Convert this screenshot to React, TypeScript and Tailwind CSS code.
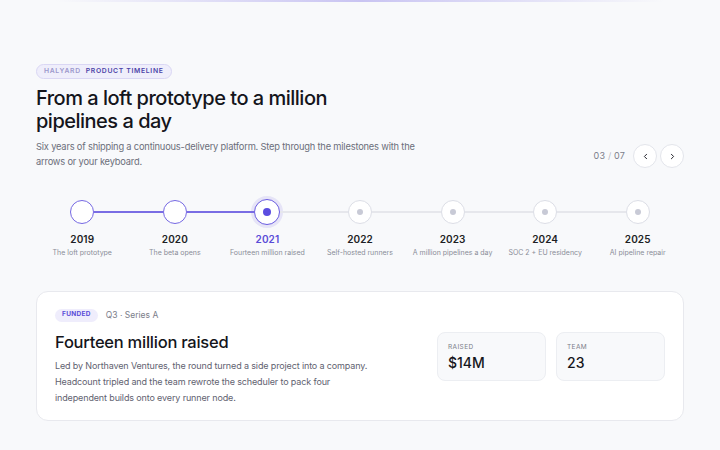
import React, { useState } from 'react';

type Milestone = {
    year: string;
    label: string;
};

const milestones: Milestone[] = [
    { year: '2019', label: 'The loft prototype' },
    { year: '2020', label: 'The beta opens' },
    { year: '2021', label: 'Fourteen million raised' },
    { year: '2022', label: 'Self-hosted runners' },
    { year: '2023', label: 'A million pipelines a day' },
    { year: '2024', label: 'SOC 2 + EU residency' },
    { year: '2025', label: 'AI pipeline repair' },
];

function Node({ index, active }: { index: number; active: number }) {
    if (index < active) {
        return <div className="w-[24px] h-[24px] rounded-full bg-white border-[1.5px] border-[#7568e3] shrink-0" />;
    }
    if (index === active) {
        return (
            <div className="w-[26px] h-[26px] rounded-full bg-white border-[1.5px] border-[#6a5ce0] shadow-[0_0_0_3px_rgba(117,104,227,0.14)] flex items-center justify-center shrink-0">
                <div className="w-[8px] h-[8px] rounded-full bg-[#5b4de0]" />
            </div>
        );
    }
    return (
        <div className="w-[24px] h-[24px] rounded-full bg-white border-[1.5px] border-[#dcdee6] flex items-center justify-center shrink-0">
            <div className="w-[6px] h-[6px] rounded-full bg-[#c8cad6]" />
        </div>
    );
}

export default function App() {
    const [active, setActive] = useState(2);
    const current = milestones[active];

    return (
        <div className="w-[720px] h-[450px] bg-[#f8f9fb] overflow-hidden relative font-['Inter',sans-serif] text-[#15161c]">
            {/* top glow line */}
            <div className="h-[2px] mx-[55px] bg-gradient-to-r from-transparent via-[#c9c4f2] to-transparent" />

            <div className="px-[36px] pt-[62px]">
                {/* Eyebrow */}
                <div className="flex w-fit items-center gap-[5px] h-[15px] px-[7px] rounded-full bg-[#efeefb] border border-[#dad7f4] text-[6.8px] font-semibold tracking-[0.1em]">
                    <span className="text-[#9c98cc]">HALYARD</span>
                    <span className="text-[#4c44a8]">PRODUCT TIMELINE</span>
                </div>

                {/* Header */}
                <div className="flex items-end justify-between">
                    <div>
                        <h1 className="mt-[8px] text-[20px] leading-[23px] font-medium tracking-[-0.025em] text-[#14151b]">
                            From a loft prototype to a million
                            <br />
                            pipelines a day
                        </h1>
                        <p className="mt-[6px] w-[380px] text-[9.3px] leading-[15px] tracking-[-0.02em] text-[#6b6e7a]">
                            Six years of shipping a continuous-delivery platform. Step through the milestones with the arrows or your keyboard.
                        </p>
                    </div>
                    <div className="flex items-center gap-[3px] mb-[1px]">
                        <span className="text-[9px] text-[#7b7e8a] mr-[5px] tracking-[0.02em]">
                            0{active + 1} <span className="text-[#b8bac4]">/</span> 07
                        </span>
                        <button
                            className="w-[24px] h-[24px] rounded-full bg-white border border-[#e3e5eb] flex items-center justify-center"
                            onClick={() => setActive(Math.max(0, active - 1))}
                        >
                            <svg width="9" height="9" viewBox="0 0 24 24" fill="none" stroke="#22232b" strokeWidth="2.6" strokeLinecap="round" strokeLinejoin="round">
                                <path d="M15 18l-6-6 6-6" />
                            </svg>
                        </button>
                        <button
                            className="w-[24px] h-[24px] rounded-full bg-white border border-[#e3e5eb] flex items-center justify-center"
                            onClick={() => setActive(Math.min(6, active + 1))}
                        >
                            <svg width="9" height="9" viewBox="0 0 24 24" fill="none" stroke="#22232b" strokeWidth="2.6" strokeLinecap="round" strokeLinejoin="round">
                                <path d="M9 18l6-6-6-6" />
                            </svg>
                        </button>
                    </div>
                </div>

                {/* Timeline */}
                <div className="grid grid-cols-7 mt-[30px]">
                    {milestones.map((m, i) => (
                        <button key={m.year} className="flex flex-col items-center" onClick={() => setActive(i)}>
                            <div className="flex items-center w-full h-[26px]">
                                <div className={`flex-1 h-[2px] ${i === 0 ? 'bg-transparent' : i <= active ? 'bg-[#7a6de4]' : 'bg-[#e6e7ec]'}`} />
                                <Node index={i} active={active} />
                                <div className={`flex-1 h-[2px] ${i === 6 ? 'bg-transparent' : i < active ? 'bg-[#7a6de4]' : 'bg-[#e6e7ec]'}`} />
                            </div>
                            <div className={`mt-[8px] text-[10px] leading-[13px] font-semibold tracking-[0.01em] ${i === active ? 'text-[#5a4cd8]' : 'text-[#1d1e25]'}`}>
                                {m.year}
                            </div>
                            <div className="mt-[2px] text-[7px] leading-[10px] text-[#8a8d98] whitespace-nowrap">
                                {m.label}
                            </div>
                        </button>
                    ))}
                </div>

                {/* Detail card */}
                <div className="mt-[33px] h-[130px] bg-white border border-[#e8e9ee] rounded-[12px] pl-[18px] pr-[18px] pt-[2px] flex items-center justify-between">
                    <div>
                        <div className="flex items-center gap-[8px]">
                            <span className="h-[13px] px-[7px] rounded-full bg-[#efedfc] text-[#5a4cd8] text-[6.5px] font-bold tracking-[0.05em] flex items-center">
                                FUNDED
                            </span>
                            <span className="text-[8.5px] text-[#7b7e8a]">Q3 · Series A</span>
                        </div>
                        <h2 className="mt-[9px] text-[16.5px] leading-[22px] font-medium tracking-[-0.015em] text-[#14151b]">
                            {current.label}
                        </h2>
                        <p className="mt-[5px] w-[320px] text-[9px] leading-[16px] tracking-[-0.015em] text-[#5f6270]">
                            Led by Northaven Ventures, the round turned a side project into a company. Headcount tripled and the team rewrote the scheduler to pack four independent builds onto every runner node.
                        </p>
                    </div>
                    <div className="flex gap-[10px] mb-[2px]">
                        <div className="w-[109px] h-[49px] rounded-[8px] bg-[#f8f9fb] border border-[#eceef2] px-[10px] pt-[10px]">
                            <div className="text-[6.5px] tracking-[0.06em] text-[#7b7e8a]">RAISED</div>
                            <div className="mt-[2px] text-[14px] leading-[18px] font-medium text-[#15161c]">$14M</div>
                        </div>
                        <div className="w-[109px] h-[49px] rounded-[8px] bg-[#f8f9fb] border border-[#eceef2] px-[10px] pt-[10px]">
                            <div className="text-[6.5px] tracking-[0.06em] text-[#7b7e8a]">TEAM</div>
                            <div className="mt-[2px] text-[14px] leading-[18px] font-medium text-[#15161c]">23</div>
                        </div>
                    </div>
                </div>
            </div>
        </div>
    );
}
